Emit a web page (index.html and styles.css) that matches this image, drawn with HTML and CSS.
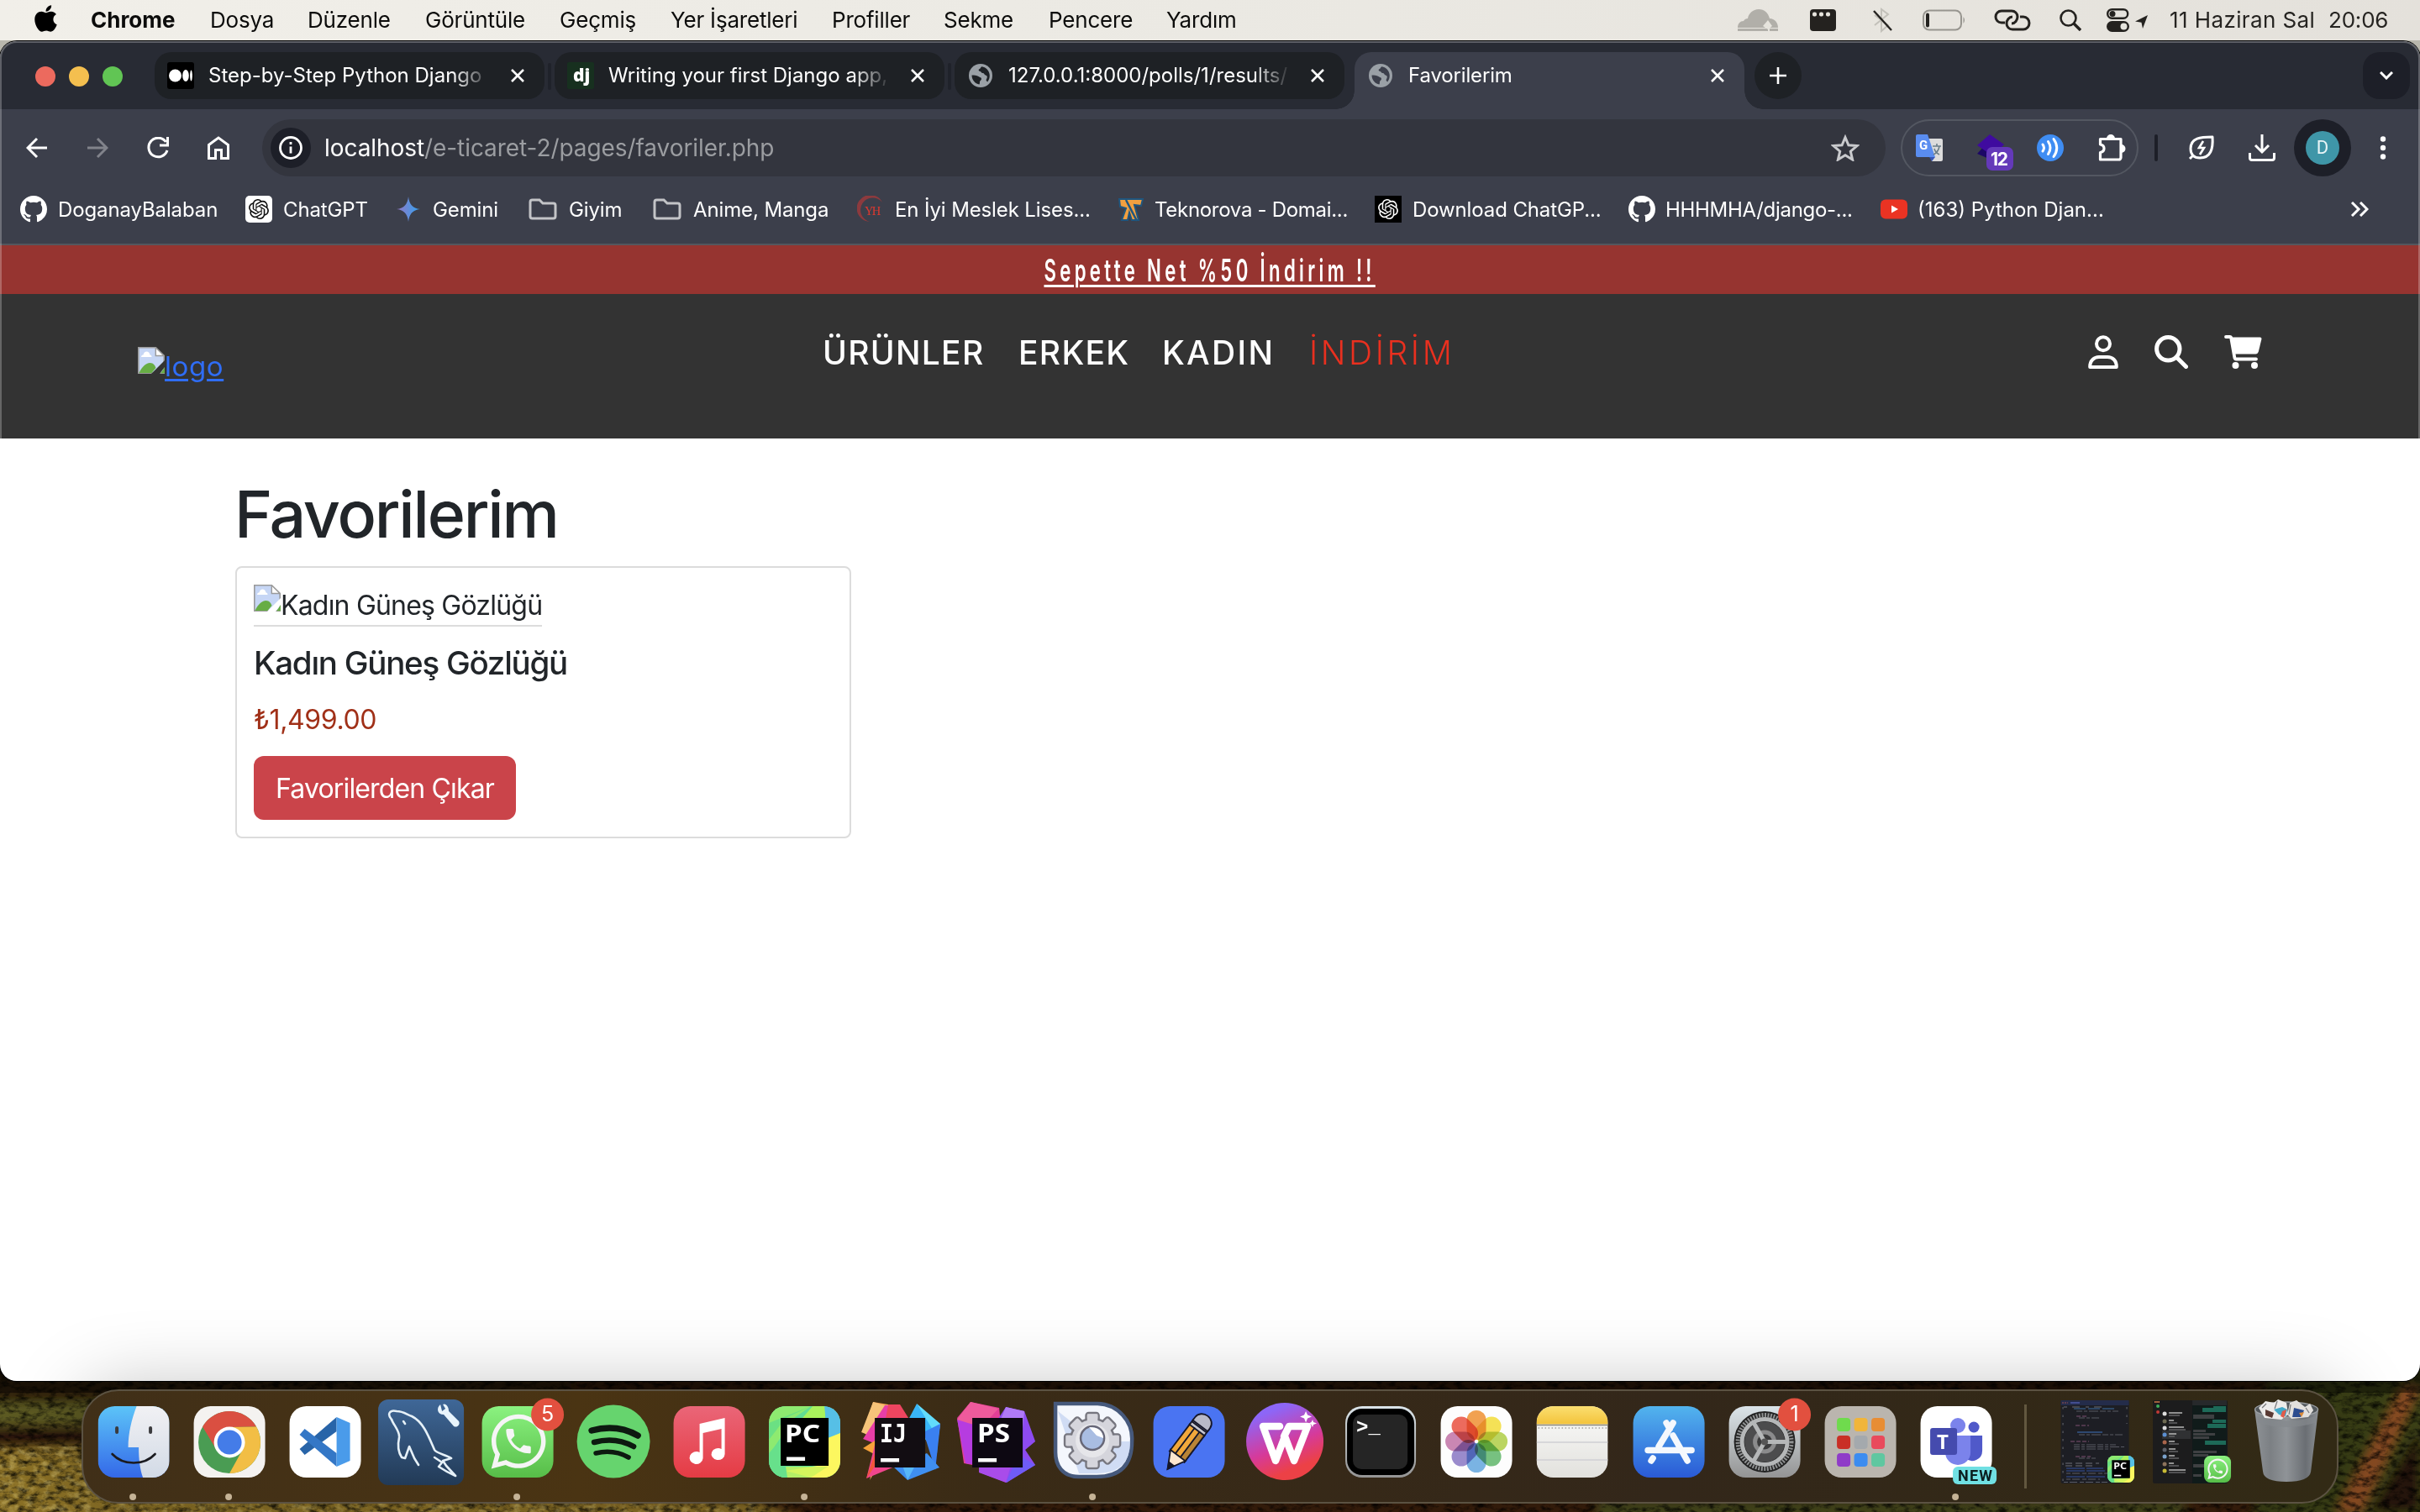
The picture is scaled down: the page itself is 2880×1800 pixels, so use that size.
FILE: index.html
```html
<!DOCTYPE html>
<html lang="tr">
<head>
<meta charset="utf-8">
<title>Favorilerim</title>
<link rel="stylesheet" href="styles.css">
</head>
<body>
<svg class="defs" width="0" height="0" aria-hidden="true">
  <defs>
    <symbol id="github" viewBox="0 0 16 16"><path fill="#fff" d="M8 0C3.58 0 0 3.58 0 8c0 3.54 2.29 6.53 5.47 7.59.4.07.55-.17.55-.38 0-.19-.01-.82-.01-1.49-2.01.37-2.53-.49-2.69-.94-.09-.23-.48-.94-.82-1.13-.28-.15-.68-.52-.01-.53.63-.01 1.08.58 1.23.82.72 1.21 1.87.87 2.33.66.07-.52.28-.87.51-1.07-1.78-.2-3.64-.89-3.64-3.95 0-.87.31-1.59.82-2.15-.08-.2-.36-1.02.08-2.12 0 0 .67-.21 2.2.82.64-.18 1.32-.27 2-.27s1.36.09 2 .27c1.53-1.04 2.2-.82 2.2-.82.44 1.1.16 1.92.08 2.12.51.56.82 1.27.82 2.15 0 3.07-1.87 3.75-3.65 3.95.29.25.54.73.54 1.48 0 1.07-.01 1.93-.01 2.2 0 .21.15.46.55.38A8.01 8.01 0 0 0 16 8c0-4.42-3.58-8-8-8z"/></symbol>
    <symbol id="openai" viewBox="0 0 24 24"><path fill="currentColor" d="M22.2819 9.8211a5.9847 5.9847 0 0 0-.5157-4.9108 6.0462 6.0462 0 0 0-6.5098-2.9A6.0651 6.0651 0 0 0 4.9807 4.1818a5.9847 5.9847 0 0 0-3.9977 2.9 6.0462 6.0462 0 0 0 .7427 7.0966 5.98 5.98 0 0 0 .511 4.9107 6.051 6.051 0 0 0 6.5146 2.9001A5.9847 5.9847 0 0 0 13.2599 24a6.0557 6.0557 0 0 0 5.7718-4.2058 5.9894 5.9894 0 0 0 3.9977-2.9001 6.0557 6.0557 0 0 0-.7475-7.0729zm-9.022 12.6081a4.4755 4.4755 0 0 1-2.8764-1.0408l.1419-.0804 4.7783-2.7582a.7948.7948 0 0 0 .3927-.6813v-6.7369l2.02 1.1686a.071.071 0 0 1 .038.052v5.5826a4.504 4.504 0 0 1-4.4945 4.4944zm-9.6607-4.1254a4.4708 4.4708 0 0 1-.5346-3.0137l.142.0852 4.783 2.7582a.7712.7712 0 0 0 .7806 0l5.8428-3.3685v2.3324a.0804.0804 0 0 1-.0332.0615L9.74 19.9502a4.4992 4.4992 0 0 1-6.1408-1.6464zM2.3408 7.8956a4.485 4.485 0 0 1 2.3655-1.9728V11.6a.7664.7664 0 0 0 .3879.6765l5.8144 3.3543-2.0201 1.1685a.0757.0757 0 0 1-.071 0l-4.8303-2.7865A4.504 4.504 0 0 1 2.3408 7.872zm16.5963 3.8558L13.1038 8.364 15.1192 7.2a.0757.0757 0 0 1 .071 0l4.8303 2.7913a4.4944 4.4944 0 0 1-.6765 8.1042v-5.6772a.79.79 0 0 0-.407-.667zm2.0107-3.0231l-.142-.0852-4.7735-2.7818a.7759.7759 0 0 0-.7854 0L9.409 9.2297V6.8974a.0662.0662 0 0 1 .0284-.0615l4.8303-2.7866a4.4992 4.4992 0 0 1 6.6802 4.66zM8.3065 12.863l-2.02-1.1638a.0804.0804 0 0 1-.038-.0567V6.0742a4.4992 4.4992 0 0 1 7.3757-3.4537l-.142.0805L8.704 5.459a.7948.7948 0 0 0-.3927.6813zm1.0976-2.3654l2.602-1.4998 2.6069 1.4998v2.9994l-2.5974 1.4997-2.6067-1.4997Z"/></symbol>
    <symbol id="globe" viewBox="0 0 28 28"><circle cx="14" cy="14" r="14" fill="#9aa0a6"/><path fill="var(--hole)" d="M3.500 13.500c3 0 6 0 8 1.500 1.600 1.200 3.500 1 3.500 3 0 1.500-2 2-2 3.500 0 1.200 0 2-.5 3-5-.6-9-5.500-9-11zM15.500 3.200c-2 .8-1 2.300-3 3-1.500.6-.8 2.500.7 2.500 1.500.2 1.500 2.300 3.300 2.300 2 0 1.700 2 3.500 2.500 1.500.5 2 1 1.700 3-.2 1.200-1.400 2-1 3.500l1.500 1.500c3.500-4 3.500-11-.5-15-1.800-1.800-4-3-6.200-3.300z"/></symbol>
    <symbol id="folder" viewBox="0 0 34 26"><path d="M2 4.500a2.500 2.500 0 0 1 2.500-2.500h8.500l4 4h12.500a2.500 2.500 0 0 1 2.500 2.500v13a2.500 2.500 0 0 1-2.500 2.500h-25a2.500 2.500 0 0 1-2.500-2.500z" fill="none" stroke="#c3c4c7" stroke-width="3"/></symbol>
    <symbol id="close" viewBox="0 0 16 16"><path d="M1 1l14 14M15 1L1 15" stroke="#fff" stroke-width="2.600" fill="none"/></symbol>
    <symbol id="broken" viewBox="0 0 32 32"><path d="M.8.8h20.500L31.200 10.500V31.200H.8z" fill="#c6d6f5" stroke="#9a9a9a" stroke-width="1.600"/><path d="M4 12c0-2 1.500-2.500 2.500-2.500 .6-2.500 2-4 4-4s3.500 1.500 4 4c1.500 0 2 1 2 2.500z" fill="#fff"/><path d="M1.500 31c3-7 8-12 13-12 4 0 6 3 7 6l-5 6z" fill="#67ad45"/><path d="M21.300.8v9.700h9.900z" fill="#fff" stroke="#9a9a9a" stroke-width="1.400"/><path d="M32 16v8l-6 8h-10z" fill="var(--page)"/><path d="M32 24.500l-5 6.700h5z" fill="#67ad45"/></symbol>
    <symbol id="whatsapp" viewBox="0 0 448 512"><path fill="#f5f5f5" fill-rule="evenodd" d="M380.900 97.100C339 55.100 283.200 32 223.900 32c-122.400 0-222 99.600-222 222 0 39.100 10.200 77.300 29.600 111L0 480l117.700-30.900c32.400 17.700 68.900 27 106.100 27h.1c122.300 0 224.100-99.600 224.100-222 0-59.300-25.200-115-67.100-157zM223.900 438.700c-33.200 0-65.700-8.900-94-25.700l-6.700-4-69.800 18.300L72 359.200l-4.400-7c-18.500-29.400-28.200-63.300-28.200-98.200 0-101.700 82.800-184.500 184.600-184.500 49.300 0 95.600 19.200 130.400 54.100 34.800 34.900 56.200 81.200 56.100 130.500 0 101.800-84.900 184.600-186.600 184.600z"/><path fill="#f5f5f5" transform="translate(88 118) scale(11.300)" d="M6.620 10.790c1.440 2.830 3.760 5.140 6.590 6.590l2.200-2.200c.27-.27.67-.36 1.020-.24 1.120.37 2.330.57 3.570.57.55 0 1 .45 1 1V20c0 .55-.45 1-1 1-9.390 0-17-7.610-17-17 0-.55.45-1 1-1h3.500c.55 0 1 .45 1 1 0 1.250.2 2.450.57 3.570.11.35.03.74-.25 1.020l-2.200 2.200z"/></symbol>
    <symbol id="pycharm" viewBox="0 0 85 85"><g clip-path="url(#sq)"><rect width="85" height="85" fill="#5fdc92"/><path d="M0 58L14 26 0 0h66v16L40 20 22 60 30 85h20L0 85z" fill="#62dd93"/><path d="M0 0h50L30 14 0 58z" fill="#8eea70"/><path d="M0 20L50 0 20 14 0 40z" fill="#54d890" opacity=".6"/><path d="M52 0h15v20L40 14z" fill="#a9f25c"/><path d="M66 0h19v32L70 38z" fill="#56bfe6"/><path d="M70 38l15-6v53H50l-30-8 50-8z" fill="#fcf75f"/><path d="M0 56l14-16v30l14 15H0z" fill="#67e08b"/><path d="M20 72h50l-20 13H22z" fill="#c9f45c" opacity=".8"/></g><rect x="14" y="14" width="57" height="57" fill="#000"/><text x="19" y="43" font-family="Noto Sans" font-weight="700" font-size="29" fill="#fff" textLength="42" lengthAdjust="spacingAndGlyphs">PC</text><rect x="21" y="60.500" width="22" height="4.500" fill="#fff"/></symbol>
    <clipPath id="sq"><rect width="85" height="85" rx="20"/></clipPath>
    <linearGradient id="gSky" x1="0" y1="0" x2="0" y2="1"><stop offset="0" stop-color="#5cc4f8"/><stop offset="1" stop-color="#3468e8"/></linearGradient>
    <linearGradient id="gFace" x1="0" y1="0" x2="0" y2="1"><stop offset="0" stop-color="#f1f1f4"/><stop offset="1" stop-color="#d2dae6"/></linearGradient>
    <linearGradient id="gSql" x1="0" y1="0" x2="0" y2="1"><stop offset="0" stop-color="#3f6797"/><stop offset="1" stop-color="#223a56"/></linearGradient>
    <linearGradient id="gWa" x1="0" y1="0" x2="0" y2="1"><stop offset="0" stop-color="#8bf280"/><stop offset="1" stop-color="#57bd48"/></linearGradient>
    <linearGradient id="gMusic" x1="0" y1="0" x2="0" y2="1"><stop offset="0" stop-color="#ea6678"/><stop offset="1" stop-color="#e53b44"/></linearGradient>
    <linearGradient id="gWps" x1=".3" y1="0" x2=".7" y2="1"><stop offset=".1" stop-color="#8d66f7"/><stop offset=".55" stop-color="#d63a9a"/><stop offset=".85" stop-color="#ec4146"/></linearGradient>
    <linearGradient id="gStore" x1="0" y1="0" x2="0" y2="1"><stop offset="0" stop-color="#52b4ee"/><stop offset="1" stop-color="#2a5ad6"/></linearGradient>
    <linearGradient id="gGray" x1="0" y1="0" x2="0" y2="1"><stop offset="0" stop-color="#dbe4e9"/><stop offset="1" stop-color="#949494"/></linearGradient>
    <linearGradient id="gNote" x1="0" y1="0" x2="0" y2="1"><stop offset="0" stop-color="#fbdf71"/><stop offset="1" stop-color="#f3c33b"/></linearGradient>
    <linearGradient id="gPaper" x1="0" y1="0" x2="0" y2="1"><stop offset="0" stop-color="#fbfbfa"/><stop offset="1" stop-color="#e2e1dd"/></linearGradient>
    <linearGradient id="gBin" x1="0" y1="0" x2="1" y2="0"><stop offset="0" stop-color="#8e9296"/><stop offset=".25" stop-color="#7c8084"/><stop offset=".5" stop-color="#8f9397"/><stop offset=".8" stop-color="#6a6e73"/><stop offset="1" stop-color="#8c9094"/></linearGradient>
    <filter id="grain" x="0" y="0" width="100%" height="100%"><feTurbulence type="fractalNoise" baseFrequency=".09 .16" numOctaves="4" seed="7"/><feColorMatrix values="0 0 0 0 0  0 0 0 0 0  0 0 0 0 0  2.6 0 0 0 -1.100"/></filter>
    <filter id="grainLight" x="0" y="0" width="100%" height="100%"><feTurbulence type="fractalNoise" baseFrequency=".1 .14" numOctaves="4" seed="21"/><feColorMatrix values="0 0 0 0 .7  0 0 0 0 .58  0 0 0 0 .2  0 2.800 0 0 -1.300"/></filter>
    <filter id="soft"><feGaussianBlur stdDeviation="6"/></filter>
  </defs>
</svg>

<div class="desktop">
  <svg class="wallpaper" viewBox="0 0 2880 180" preserveAspectRatio="none">
    <rect width="2880" height="180" fill="#3a1f0c"/>
    <g filter="url(#soft)">
      <rect x="-20" y="0" width="700" height="60" fill="#33200b"/>
      <rect x="-20" y="50" width="180" height="28" fill="#5c5a20"/>
      <rect x="-20" y="82" width="200" height="20" fill="#2a150c"/>
      <path d="M-20 104L140 102 300 156 900 166 980 200H-20z" fill="#8a6f28"/>
      <path d="M2700 0h200v200h-220z" fill="#3a3f14"/>
      <path d="M2880 30L2810 180H2780L2860 30z" fill="#8a4c24"/>
      <path d="M2880 80v100h-60z" fill="#25180c"/>
      <path d="M1900 165h700v30H1900z" fill="#47481a"/>
    </g>
    <rect width="2880" height="180" filter="url(#grain)" opacity=".75"/>
    <rect width="900" height="80" y="102" filter="url(#grainLight)" opacity=".45"/>
    <rect width="2880" height="38" fill="#000" opacity=".45"/>
  </svg>

  <header class="menubar">
    <nav class="menus">
      <svg class="apple" viewBox="0 0 384 512"><path d="M318.700 268.700c-.2-36.700 16.400-64.400 50-84.800-18.800-26.900-47.200-41.700-84.700-44.600-35.500-2.800-74.300 20.700-88.500 20.700-15 0-49.400-19.700-76.400-19.700C63.300 141.200 4 184.800 4 273.500q0 39.300 14.400 81.200c12.800 36.700 59 126.700 107.200 125.200 25.200-.6 43-17.900 75.800-17.900 31.800 0 48.300 17.900 76.400 17.900 48.600-.7 90.400-82.500 102.600-119.300-65.200-30.700-61.700-90-61.700-91.900zm-56.600-164.200c27.300-32.400 24.800-61.900 24-72.500-24.100 1.400-52 16.400-67.900 34.900-17.500 19.800-27.800 44.300-25.600 71.900 26.100 2 49.900-11.400 69.500-34.300z"/></svg>
      <b class="t">Chrome</b><span class="t">Dosya</span><span class="t">Düzenle</span><span class="t">Görüntüle</span><span class="t">Geçmiş</span><span class="t">Yer İşaretleri</span><span class="t">Profiller</span><span class="t">Sekme</span><span class="t">Pencere</span><span class="t">Yardım</span>
    </nav>
    <div class="status">
      <svg width="48" height="26" viewBox="0 0 48 26"><path fill="#b1afa9" d="M0 22c0-5 3-8 7-8 1-2 3-3 5-3 1-6 6-11 13-11s11 4 13 11c6 0 10 5 10 11z"/><path fill="#b1afa9" d="M0 23h36v3H0zM38 23h10v3H38z"/><path d="M30 20l6-7 5 7-5 4z" fill="#e6e4dd"/></svg>
      <svg width="31" height="26" viewBox="0 0 31 26"><rect width="31" height="26" rx="4" fill="#24221f"/><g fill="#e6e4dd"><rect x="3" y="3.500" width="5" height="5" rx="2"/><rect x="11" y="3.500" width="5" height="5" rx="2"/><rect x="19" y="3.500" width="5" height="5" rx="2"/></g></svg>
      <svg width="24" height="30" viewBox="0 0 24 30" fill="none"><path d="M2 9l16 12-8 7V2l8 6L2 21" stroke="#c2c0b9" stroke-width="2"/><path d="M1 4l21 23" stroke="#24221f" stroke-width="2.400"/></svg>
      <svg width="52" height="26" viewBox="0 0 52 26"><rect x="1" y="1.500" width="45" height="23" rx="7" fill="none" stroke="#97958f" stroke-width="2"/><rect x="4" y="4.500" width="4" height="17" rx="2" fill="#24221f"/><path d="M48.500 9q3 4 0 8z" fill="#97958f"/></svg>
      <svg width="44" height="26" viewBox="0 0 44 26" fill="none" stroke="#24221f" stroke-width="3"><path d="M28 9c0-4-3-7-7-7H9C5 2 2 5 2 9s3 7 7 7h4"/><path d="M31 9h4c4 0 7 3.500 7 7.500S39 24 35 24H22c-4 0-7-3-7-7"/><path d="M28 9c0 4-3 8-7 8M15 17c0-4 3-8 7-8" /></svg>
      <svg width="26" height="26" viewBox="0 0 26 26" fill="none" stroke="#24221f"><circle cx="10.500" cy="10.500" r="9" stroke-width="2.600"/><path d="M17 17l8 8" stroke-width="3.400"/></svg>
      <svg width="50" height="28" viewBox="0 0 50 28"><rect x="1.200" y="1.200" width="24" height="10.500" rx="5.200" fill="none" stroke="#24221f" stroke-width="2.400"/><circle cx="7" cy="6.500" r="3.500" fill="#24221f"/><rect y="15" width="27" height="13" rx="6.500" fill="#24221f"/><circle cx="20.500" cy="21.500" r="4" fill="#e6e4dd"/><path d="M49 8L34 15.500l7.500 1.200L43 24z" fill="#24221f"/></svg>
      <span class="t date">11 Haziran Sal</span><span class="t">20:06</span>
    </div>
  </header>

  <main class="window">
    <div class="tabstrip">
      <div class="lights"><i class="red"></i><i class="amber"></i><i class="green"></i></div>
      <div class="tab"><svg class="fav" viewBox="0 0 32 32"><rect width="32" height="32" rx="3" fill="#000"/><ellipse cx="9.500" cy="16" rx="7.500" ry="7.500" fill="#fff"/><ellipse cx="22" cy="16" rx="3.800" ry="7" fill="#fff"/><ellipse cx="28.500" cy="16" rx="1.400" ry="6.500" fill="#fff"/></svg><span class="label"><span class="t">Step-by-Step Python Django</span></span><svg class="x"><use href="#close"/></svg></div>
      <i class="sep"></i>
      <div class="tab"><svg class="fav" viewBox="0 0 32 32"><rect width="32" height="32" rx="2" fill="#17301f"/><text x="7" y="22.500" font-family="Open Sans" font-weight="800" font-size="21" fill="#fff">dj</text></svg><span class="label"><span class="t">Writing your first Django app,</span></span><svg class="x"><use href="#close"/></svg></div>
      <i class="sep"></i>
      <div class="tab"><svg class="fav small"><use href="#globe"/></svg><span class="label"><span class="t">127.0.0.1:8000/polls/1/results/</span></span><svg class="x"><use href="#close"/></svg></div>
      <div class="tab active"><svg class="fav small"><use href="#globe"/></svg><span class="label"><span class="t">Favorilerim</span></span><svg class="x"><use href="#close"/></svg></div>
      <div class="newtab"><svg width="20" height="20"><path d="M10 0v20M0 10h20" stroke="#fff" stroke-width="2.600"/></svg></div>
      <div class="tabsearch"><svg width="16" height="10"><path d="M1 1l7 7 7-7" fill="none" stroke="#fff" stroke-width="3"/></svg></div>
    </div>

    <div class="toolbar">
      <div class="navs">
        <svg width="26" height="26" viewBox="0 0 26 26" fill="none" stroke="#fff" stroke-width="3"><path d="M25 13H2M13 2L2 13l11 11"/></svg>
        <svg width="26" height="26" viewBox="0 0 26 26" fill="none" stroke="#81838b" stroke-width="3"><path d="M1 13h23M13 2l11 11-11 11"/></svg>
        <svg width="26" height="26" viewBox="0 0 26 26" fill="none" stroke="#fff" stroke-width="3"><path d="M24 16A11.300 11.300 0 1 1 22.500 6"/><path d="M24.500 0v10h-9.500" /></svg>
        <svg width="28" height="28" viewBox="0 0 28 28" fill="none" stroke="#fff" stroke-width="3"><path d="M2.500 10.500L14 2l11.500 8.500V26.500H17.500V16.500h-7V26.500H2.500z"/></svg>
      </div>
      <div class="omnibox">
        <div class="info"><svg width="28" height="28" viewBox="0 0 28 28"><circle cx="14" cy="14" r="12.500" fill="none" stroke="#fff" stroke-width="2.800"/><path d="M14 12.500v8M14 7v3" stroke="#fff" stroke-width="2.800"/></svg></div>
        <span class="t url">localhost<em>/e-ticaret-2/pages/favoriler.php</em></span>
        <svg class="star" width="34" height="32" viewBox="0 0 34 32"><path d="M17 3.500l3.900 9.300 10 .8-7.600 6.600 2.300 9.800L17 24.800 8.400 30l2.300-9.800L3.100 13.600l10-.8z" fill="none" stroke="#c9cacd" stroke-width="3"/></svg>
      </div>
      <div class="extensions">
        <svg width="32" height="32" viewBox="0 0 32 32"><path d="M14 5h16a2 2 0 0 1 2 2v23a2 2 0 0 1-2 2H19z" fill="#dcdcdc"/><path d="M0 2a2 2 0 0 1 2-2h12l9 27H2a2 2 0 0 1-2-2z" fill="#5a8df0"/><path d="M16 27h7l-4 5z" fill="#3757b5"/><text x="4" y="18" font-family="Roboto" font-weight="700" font-size="15" fill="#fff">G</text><path d="M20 14h10M25 11v3M28 14c-1 6-5 9-7 10M22 17c1 4 4 6 6 7" stroke="#6b7f8a" stroke-width="1.600" fill="none"/></svg>
        <svg width="46" height="46" viewBox="0 0 46 46"><path d="M1 24l11-12 10 8v10l-7 0z" fill="#1c0766"/><path d="M16 1l17 12-13 14L1 14z" fill="#3f0b9f"/><rect x="12" y="16" width="32" height="28" rx="7" fill="#6439b9"/><text x="17" y="37.500" font-family="Inter" font-weight="700" font-size="21" fill="#fff" textLength="21">12</text></svg>
        <svg width="32" height="32" viewBox="0 0 32 32"><circle cx="16" cy="16" r="16" fill="#3f8df3"/><g fill="none" stroke="#fff" stroke-width="3" stroke-linecap="round"><path d="M7 12q3 4 0 8M13.500 8.500q5 7.500 0 15M20 5.500q7.500 10.500 0 21"/></g></svg>
        <svg width="34" height="34" viewBox="0 0 34 34"><path d="M3.500 6.500h24.500v22a2.500 2.500 0 0 1-2.500 2.500H3.500v-8.500c6-1 6-8.500 0-9.500z" fill="none" stroke="#fff" stroke-width="3.200" stroke-linejoin="round"/><path d="M11 6a5 5 0 0 1 10 0zM28.500 13a5 5 0 0 1 0 10z" fill="#fff"/></svg>
      </div>
      <i class="divider"></i>
      <svg class="leaf" width="32" height="30" viewBox="0 0 32 30" fill="none" stroke="#fff" stroke-width="3"><path d="M29 2c-14 0-26 1-26 14 0 7 4 11 11 11 13 0 16-11 15-25zM6 24l-4 4" stroke-linejoin="round"/><path d="M18 7l-5 8h6l-5 8" stroke-width="2.600"/></svg>
      <svg class="download" width="32" height="32" viewBox="0 0 32 32" fill="none" stroke="#fff" stroke-width="3"><path d="M16 0v20M8 13l8 8 8-8M1.500 22v6q0 2.500 2.500 2.500h24q2.500 0 2.500-2.500v-6"/></svg>
      <div class="avatar"><span>D</span></div>
      <svg class="kebab" width="8" height="28"><circle cx="4" cy="3.500" r="3.200" fill="#fff"/><circle cx="4" cy="14" r="3.200" fill="#fff"/><circle cx="4" cy="24.500" r="3.200" fill="#fff"/></svg>
    </div>

    <div class="bookmarks">
      <a><svg><use href="#github"/></svg><span class="t">DoganayBalaban</span></a>
      <a><svg class="gpt" viewBox="0 0 32 32"><rect width="32" height="32" rx="5" fill="#fff"/><use href="#openai" x="4" y="4" width="24" height="24"/></svg><span class="t">ChatGPT</span></a>
      <a><svg viewBox="0 0 32 32"><defs><linearGradient id="gGem"><stop offset=".1" stop-color="#8a7bc8"/><stop offset=".8" stop-color="#459ae8"/></linearGradient></defs><path d="M16 1c1 9 5 14 14 15-9 1-13 6-14 15-1-9-5-14-14-15 9-1 13-6 14-15z" fill="url(#gGem)"/></svg><span class="t">Gemini</span></a>
      <a><svg class="dir"><use href="#folder"/></svg><span class="t">Giyim</span></a>
      <a><svg class="dir"><use href="#folder"/></svg><span class="t">Anime, Manga</span></a>
      <a><svg viewBox="0 0 32 32"><path d="M15 31A16 16 0 1 1 30 8 14.500 14.500 0 1 0 15 31z" fill="#8c3a3e"/><text x="9" y="23" font-family="Liberation Serif" font-size="14.500" fill="#e0392f" textLength="19">YH</text></svg><span class="t">En İyi Meslek Lises...</span></a>
      <a><svg viewBox="0 0 32 32"><path d="M2 4h28l-2 8-8-1 5 18h-8l-3-9-2 9H5l5-14-7-2z" fill="#f2a040" stroke="#1f567f" stroke-width="2"/><path d="M10 5l13 25" stroke="#1f567f" stroke-width="2.500"/></svg><span class="t tight">Teknorova - Domai...</span></a>
      <a><svg class="gpt inv" viewBox="0 0 32 32"><rect width="32" height="32" fill="#000"/><use href="#openai" x="4" y="4" width="24" height="24"/></svg><span class="t">Download ChatGP...</span></a>
      <a><svg><use href="#github"/></svg><span class="t tight">HHHMHA/django-...</span></a>
      <a><svg viewBox="0 0 32 32"><rect y="4.500" width="32" height="23" rx="6" fill="#ea3323"/><path d="M13 11.500v9l8-4.500z" fill="#fff"/></svg><span class="t wide">(163) Python Djan...</span></a>
      <svg class="more" width="22" height="18"><path d="M2 1l8 8-8 8M12 1l8 8-8 8" fill="none" stroke="#fff" stroke-width="3"/></svg>
    </div>

    <div class="promo"><a class="t">Sepette Net %50 İndirim !!</a></div>
    <div class="sitebar">
      <a class="logo"><svg><use href="#broken"/></svg><span class="t">logo</span></a>
      <nav class="sitenav"><a class="t">ÜRÜNLER</a><a class="t">ERKEK</a><a class="t kadin">KADIN</a><a class="t sale">İNDİRİM</a></nav>
      <div class="siteicons">
        <svg width="36" height="40" viewBox="0 0 36 40" fill="none" stroke="#fff" stroke-width="4"><circle cx="18" cy="10.200" r="8"/><path d="M2.200 38C2 30 7.500 26 13 26h10c6 0 11 4 10.800 12z" stroke-linejoin="round"/></svg>
        <svg width="40" height="40" viewBox="0 0 40 40" fill="none" stroke="#fff"><circle cx="16.300" cy="16.300" r="13.700" stroke-width="5"/><path d="M26.500 26.500l11 11" stroke-width="5" stroke-linecap="round"/></svg>
        <svg width="45" height="40" viewBox="0 0 45 40"><path d="M2 2h4.500q1.500 0 1.800 1.700l4 22.800q.3 2 2 2H38" fill="none" stroke="#fff" stroke-width="3.800" stroke-linecap="round"/><path d="M7.500 2.500H42.500q2.300 0 1.900 2.500l-3.600 14.500q-.8 3-3.500 3H12z" fill="#fff"/><circle cx="13.500" cy="36" r="4" fill="#fff"/><circle cx="36" cy="36" r="4" fill="#fff"/></svg>
      </div>
    </div>

    <section class="page">
      <h1><span class="t">Favorilerim</span></h1>
      <article class="card">
        <div class="picture"><svg><use href="#broken"/></svg><span class="t">Kadın Güneş Gözlüğü</span></div>
        <h5><span class="t">Kadın Güneş Gözlüğü</span></h5>
        <p class="price"><span class="t">₺1,499.00</span></p>
        <button><span class="t">Favorilerden Çıkar</span></button>
      </article>
    </section>
  </main>

  <footer class="dock">
    <svg viewBox="0 0 114 136"><g transform="translate(14.500 20)"><g clip-path="url(#sq)"><rect width="85" height="85" fill="url(#gSky)"/><path d="M46 0C40 16 36 32 36 49h12.500c0 14 1.500 26 5 36H85V0z" fill="url(#gFace)"/></g><rect x="20.500" y="24" width="4" height="9" rx="2" fill="#3a3a3d"/><rect x="60.500" y="24" width="4" height="9" rx="2" fill="#3a3a3d"/><path d="M17 57c13 14 38 14 51 0" fill="none" stroke="#1b1b20" stroke-width="2.600" stroke-linecap="round"/></g><circle cx="56" cy="128" r="4" class="run"/></svg>
    <svg viewBox="0 0 114 136"><g transform="translate(14.500 20)"><rect width="85" height="85" rx="20" fill="#f4f2f0"/><circle cx="42.500" cy="43" r="37" fill="#4a9c53"/><path d="M10.500 24.500A37 37 0 0 1 74.500 24.500L42.500 25 27 52z" fill="#da4f41"/><path d="M74.500 24.500A37 37 0 0 1 42.500 80L58 52 42.500 25z" fill="#f2be45"/><circle cx="42.500" cy="43" r="18.500" fill="#fff"/><circle cx="42.500" cy="43" r="14.500" fill="#447ce8"/></g><circle cx="56" cy="128" r="4" class="run"/></svg>
    <svg viewBox="0 0 114 136"><g transform="translate(14.500 20)"><rect width="85" height="85" rx="20" fill="#fff"/><path d="M56 13L12 51l6 7L56 30z" fill="#2864a8"/><path d="M56 72L12 34l6-7 38 29z" fill="#3477c6"/><path d="M56 13l16 7v45l-16 7z" fill="#4a9bea"/></g></svg>
    <svg viewBox="0 0 114 136"><rect x="6" y="12" width="102" height="102" rx="12" fill="url(#gSql)"/><g fill="none" stroke="#e6f1f8" stroke-width="2.600" stroke-linejoin="round" stroke-linecap="round"><path d="M22 36c-6-7-2-12 6-10 8 0 12 4 18 6 14 7 20 24 27 40 2 4 14 6 20 10l-10 3 4 6 11 12c-7-3-14-7-20-11l4-5-9-6"/><path d="M22 36c2 6 10 14 9 21-2 9-1 18 3 24l4 1 5-14 6 14 5 8"/><path d="M36 38l2 3"/></g><path d="M80 18c-5 4-4 12 4 12l12 14c4 2 8-2 6-6L90 26c0-6-4-10-7-8l3 5-4 3z" fill="#e8f4fc"/></svg>
    <svg viewBox="0 0 114 136"><g transform="translate(14.500 20)"><rect width="85" height="85" rx="20" fill="url(#gWa)"/><use href="#whatsapp" x="10" y="5" width="67" height="74"/></g><circle cx="92.500" cy="30" r="19.500" class="badge"/><text x="92.500" y="38" class="badge-n">5</text><circle cx="56" cy="128" r="4" class="run"/></svg>
    <svg viewBox="0 0 114 136"><circle cx="57" cy="62" r="43.500" fill="#66d46e"/><g fill="none" stroke="#0d1a10" stroke-linecap="round"><path d="M31 49q30-8 55 6" stroke-width="7.500"/><path d="M34 63q25-7 47 5" stroke-width="6.500"/><path d="M36 76q21-5 39 5" stroke-width="5.500"/></g></svg>
    <svg viewBox="0 0 114 136"><g transform="translate(14.500 20)"><rect width="85" height="85" rx="20" fill="url(#gMusic)"/><path d="M31 21l30-7v43a8 7 0 1 1-4-6V27l-22 5v30a8 7.500 0 1 1-4-7z" fill="#fff"/></g></svg>
    <svg viewBox="0 0 114 136"><use href="#pycharm" x="14" y="20" width="85" height="85"/><circle cx="56" cy="128" r="4" class="run"/></svg>
    <svg viewBox="0 0 114 136"><g transform="translate(2 0)"><path d="M22 15l18 3 10 20-20 50-12 20 10-40-18-18z" fill="#f4a85a"/><path d="M22 15L8 51l20 8L38 20z" fill="#f6c47a"/><path d="M36 19l18 0 12 20-30 30-26-10z" fill="#e83ea8"/><path d="M40 18h14l10 16-28 6z" fill="#ee4560"/><path d="M10 70L32 56l8 30z" fill="#f7a23a"/><path d="M14 106L24 66l38 20z" fill="#f0458c"/><path d="M14 106l10-30 8 4z" fill="#f2553c"/><path d="M74 17l28 24-4 26z" fill="#62dcfb"/><path d="M74 17L64 36l34 40 1-18z" fill="#39b6f8"/><path d="M102 41l-20 10 14 45z" fill="#3a80f0"/><path d="M46 92l40-16 15 17-38 15z" fill="#3f8ff0"/><path d="M56 88l20-5-13 25z" fill="#58b8fa"/><rect x="24" y="34" width="60" height="59" fill="#120d12"/><text x="30" y="63" font-family="DejaVu Sans Mono" font-weight="700" font-size="30" fill="#fff" textLength="32" lengthAdjust="spacingAndGlyphs">IJ</text><rect x="31" y="82" width="22" height="4.500" fill="#fff"/></g></svg>
    <svg viewBox="0 0 114 136"><g transform="translate(4 0)"><path d="M22 15l34 7 6 60-38 8-10-2L6 34z" fill="#e33f97"/><path d="M6 36l36 6v50l-26-4z" fill="#b63ce0"/><path d="M22 15l33 8-20 22L6 36z" fill="#ee5a9c"/><path d="M64 21l22 5 13 36-12 10 12 18-34 21-32-12 10-46z" fill="#8d4bf0"/><path d="M64 21l22 5-2 20-28-6z" fill="#b07af7"/><path d="M32 90l40-6-8 27-32-12z" fill="#a94cea"/><path d="M64 111l35-21-20-12z" fill="#6f5cf7"/><rect x="24" y="34" width="60" height="59" fill="#0d0812"/><text x="30" y="63" font-family="Noto Sans" font-weight="700" font-size="30" fill="#fff" textLength="39" lengthAdjust="spacingAndGlyphs">PS</text><rect x="31" y="82" width="22" height="4.500" fill="#fff"/></g></svg>
    <svg viewBox="0 0 114 136"><path d="M12 17h50a42 42 0 0 1 41 45c0 26-12 42-42 42H40C20 104 12 90 12 75z" fill="#f4f7fd" stroke="#46597c" stroke-width="4.500"/><path d="M15 26l45 36h41c0 24-12 38-39 38H40z" fill="#c4d3f0" opacity=".75"/><g transform="translate(56 61)"><g fill="#d5d5dc" stroke="#76767f" stroke-width="2.500"><rect x="-7.500" y="-33" width="15" height="66" rx="3"/><rect x="-7.500" y="-33" width="15" height="66" rx="3" transform="rotate(45)"/><rect x="-7.500" y="-33" width="15" height="66" rx="3" transform="rotate(90)"/><rect x="-7.500" y="-33" width="15" height="66" rx="3" transform="rotate(135)"/><circle r="26"/></g><g fill="#d5d5dc"><rect x="-6.300" y="-31.500" width="12.600" height="63"/><rect x="-6.300" y="-31.500" width="12.600" height="63" transform="rotate(45)"/><rect x="-6.300" y="-31.500" width="12.600" height="63" transform="rotate(90)"/><rect x="-6.300" y="-31.500" width="12.600" height="63" transform="rotate(135)"/></g><circle r="20" fill="#e6e6ea"/><circle cy="-3" r="14" fill="#a9bde2" stroke="#676777" stroke-width="2.500"/><path d="M-4-16q16 0 17 13l-8-3z" fill="#fff"/></g><circle cx="56" cy="128" r="4" class="run"/></svg>
    <svg viewBox="0 0 114 136"><rect x="14.500" y="20" width="85" height="85" rx="20" fill="#4a74f2"/><g transform="translate(57 61) rotate(37) scale(.92)" stroke="#16172a" stroke-width="2"><path d="M-12-18h24v44H-12z" fill="#f2a83b"/><path d="M4-18h8v44H4z" fill="#b98436"/><path d="M-12 24L0 46 12 24z" fill="#fde6cf"/><path d="M-4 38L0 46l4-8z" fill="#16172a"/><rect x="-12" y="-26" width="24" height="9" fill="#c6c6d0"/><path d="M-12-24v-5a12 11 0 0 1 24 0v5z" fill="#b9bac8"/><path d="M-4-18v42M-12-22h24"/></g></svg>
    <svg viewBox="0 0 114 136"><circle cx="57" cy="62" r="46" fill="url(#gWps)"/><path d="M31 44h20M31 44l15 41 11-29 11 29L84 44H62l-6 12" fill="none" stroke="#fff" stroke-width="8.500" stroke-linejoin="round" stroke-linecap="round"/><path d="M82 26l2 4.500 5 2-5 2-2 5-2-5-5-2 5-2zM90 36l1 3 4 1.500-4 1.500-1 3-1.500-3-3-1.500 3-1.500z" fill="#fff"/></svg>
    <svg viewBox="0 0 114 136"><rect x="15" y="20" width="84" height="85" rx="20" fill="url(#gGray)"/><rect x="17" y="23" width="80" height="79" rx="18" fill="#000"/><rect x="24" y="30" width="65" height="65" rx="10" fill="#252525"/><text x="28" y="52" font-family="Liberation Mono" font-weight="700" font-size="24" fill="#fff">&gt;_</text></svg>
    <svg viewBox="0 0 114 136"><rect x="14.500" y="20" width="85" height="85" rx="20" fill="#fdfdfd"/><g transform="translate(57 62)" opacity=".88" class="petals"><rect x="-11.500" y="-37" width="23" height="35" rx="11.500" fill="#f0953a"/><rect x="-11.500" y="-37" width="23" height="35" rx="11.500" fill="#f3de3f" transform="rotate(45)"/><rect x="-11.500" y="-37" width="23" height="35" rx="11.500" fill="#b3d04c" transform="rotate(90)"/><rect x="-11.500" y="-37" width="23" height="35" rx="11.500" fill="#65b96f" transform="rotate(135)"/><rect x="-11.500" y="-37" width="23" height="35" rx="11.500" fill="#68a9e0" transform="rotate(180)"/><rect x="-11.500" y="-37" width="23" height="35" rx="11.500" fill="#8d7cc6" transform="rotate(225)"/><rect x="-11.500" y="-37" width="23" height="35" rx="11.500" fill="#c377a9" transform="rotate(270)"/><rect x="-11.500" y="-37" width="23" height="35" rx="11.500" fill="#ea5747" transform="rotate(315)"/></g></svg>
    <svg viewBox="0 0 114 136"><g transform="translate(14.500 20)" clip-path="url(#sq)"><rect width="85" height="85" fill="url(#gPaper)"/><rect width="85" height="21.500" fill="url(#gNote)"/><path d="M0 22.500h85" stroke="#8c8b82" stroke-width="1.500"/><path d="M2 26h83" stroke="#b5b5b3" stroke-width="2" stroke-dasharray="1.500 2.500"/><path d="M0 43h85M0 64h85" stroke="#cfcfd3" stroke-width="1.500"/></g></svg>
    <svg viewBox="0 0 114 136"><rect x="14.500" y="20" width="85" height="85" rx="20" fill="url(#gStore)"/><g stroke="#f4f8fd" stroke-width="7.500" stroke-linecap="round"><path d="M62 40L45 68M32 72.500h52M54 40l4 7M62 55l17 30M38 82l-2 3"/></g></svg>
    <svg viewBox="0 0 114 136"><rect x="14.500" y="20" width="85" height="85" rx="20" fill="url(#gGray)"/><g transform="translate(57 62.500)"><circle r="36.500" fill="#222"/><circle r="32" fill="none" stroke="#8f9192" stroke-width="5" stroke-dasharray="2 1.500"/><circle r="27" fill="none" stroke="#b5b7b8" stroke-width="5"/><circle r="24" fill="#4c4c4d"/><circle r="14" fill="#8b8b8c"/><circle r="9" fill="#3c3c3d"/><path d="M0 0h27M0 0L-13.500-23.500M0 0L-13.500 23.500" stroke="#b5b7b8" stroke-width="5"/><circle r="4" fill="#555"/></g><circle cx="92.500" cy="30" r="19.500" class="badge"/><text x="92.500" y="38" class="badge-n">1</text></svg>
    <svg viewBox="0 0 114 136"><rect x="14.500" y="20" width="85" height="85" rx="20" fill="#bab5ae"/><g transform="translate(29 34)"><rect width="16" height="16" rx="4" fill="#6fdb4d"/><rect x="20.500" width="16" height="16" rx="4" fill="#f1b53a"/><rect x="41" width="16" height="16" rx="4" fill="#e88d34"/><rect y="21" width="16" height="16" rx="4" fill="#c92f26"/><rect x="20.500" y="21" width="16" height="16" rx="4" fill="#a4a9ad"/><rect x="41" y="21" width="16" height="16" rx="4" fill="#e94a5c"/><rect y="42" width="16" height="16" rx="4" fill="#8f3bc8"/><rect x="20.500" y="42" width="16" height="16" rx="4" fill="#3c8cf0"/><rect x="41" y="42" width="16" height="16" rx="4" fill="#5fc7a0"/></g></svg>
    <svg viewBox="0 0 114 136"><rect x="14.500" y="20" width="85" height="85" rx="20" fill="#fff"/><circle cx="59" cy="43" r="9" fill="#7b83eb"/><circle cx="78" cy="45" r="6.500" fill="#5059c9"/><path d="M64 55h24v18a12 12 0 0 1-20 9z" fill="#5059c9"/><path d="M44 55h30v20a15 15 0 0 1-30 0z" fill="#7b83eb"/><rect x="26" y="46" width="32" height="32" rx="3" fill="#454bae"/><text x="34" y="71" font-family="Open Sans" font-weight="700" font-size="24" fill="#fff">T</text><rect x="53" y="92" width="52" height="21" rx="6" fill="#70e0e3"/><text x="59" y="109" font-family="Roboto" font-weight="700" font-size="18" fill="#0b1f20" textLength="41">NEW</text><circle cx="56" cy="128" r="4" class="run"/></svg>
    <i class="rule"></i>
    <svg viewBox="0 0 114 136"><rect x="16.500" y="13" width="81" height="99" rx="2" fill="#1d1e24"/><rect x="16.500" y="13" width="81" height="6" fill="#242c4a"/><g stroke-width="1.200" fill="none" opacity=".75"><path d="M18 16h7" stroke="#c8605a" stroke-dasharray="2 1"/><path d="M28 16h11" stroke="#6b7bea"/><path d="M20 21h52" stroke="#888b95" stroke-dasharray="4 6 9 7"/><path d="M32 23h48" stroke="#4b8ad0" stroke-dasharray="14 3"/><path d="M35 26h50M38 34h24M38 54h52M32 66h50M32 68.500h60M32 71h44M38 82h20" stroke="#6d6f78" stroke-dasharray="7 2 4 2 11 2"/><path d="M35 32h12M34 43h16M34 80h18M28 62h22" stroke="#a0638c" stroke-dasharray="5 2"/><path d="M36 51h30" stroke="#437fd0"/><path d="M22 88h40M22 91h34" stroke="#878a93" stroke-dasharray="8 4"/><path d="M23 94h44M23 97h46M23 104h46" stroke="#3c63c8" stroke-dasharray="22 2"/><path d="M23 100h50M23 107h40M20 110.500h52" stroke="#70727b" stroke-dasharray="5 2 9 3"/><path d="M19 21v88M95 21v20" stroke="#70727b" stroke-dasharray="2.500 7"/></g><use href="#pycharm" x="72" y="79" width="32" height="32"/></svg>
    <svg viewBox="0 0 114 136"><rect x="12" y="13" width="89" height="99" rx="2" fill="#1c1c1d"/><rect x="59" y="13" width="41" height="99" fill="#101b1a"/><rect x="59" y="13" width="41" height="6" fill="#27292b"/><rect x="23" y="49" width="34" height="10" fill="#303133"/><g stroke-width="5" stroke-linecap="round"><path d="M26 29h0" stroke="#ddd"/><path d="M26 38h0" stroke="#6d6a52"/><path d="M26 46h0" stroke="#d7d7d9"/><path d="M26 54h0" stroke="#5b8fd2"/><path d="M26 63h0" stroke="#a9654b"/><path d="M26 72h0" stroke="#5d6069"/><path d="M26 80h0" stroke="#7ba2cc"/><path d="M26 89h0" stroke="#8c735c"/><path d="M26 97h0" stroke="#c7ba34"/></g><path d="M31 28h16M31 37h6M31 45h18M31 53h9M31 62h7M31 71h8M31 79h7M31 88h6M31 96h20" stroke="#b8b8b8" stroke-width="1.300"/><path d="M31 31h13M31 40h10M31 48h20M31 56h7M31 65h12M31 74h11M31 82h12M31 91h12M31 99h20" stroke="#636365" stroke-width="1.300"/><g fill="#1d6a58"><rect x="84" y="20" width="15" height="2"/><rect x="71" y="22" width="28" height="5"/><rect x="83" y="36" width="16" height="4"/><rect x="77" y="41" width="22" height="5"/><rect x="74" y="61" width="25" height="5"/></g><g fill="#3e4042"><rect x="60" y="30" width="25" height="5"/><rect x="60" y="48" width="15" height="3"/><rect x="60" y="52" width="26" height="3"/><rect x="60" y="56" width="19" height="3"/><rect x="60" y="73" width="28" height="3"/><rect x="60" y="77" width="18" height="3"/><rect x="60" y="89" width="14" height="4"/><rect x="60" y="101" width="10" height="3"/></g><path d="M14 15h6" stroke="#d57a4a" stroke-width="2" stroke-dasharray="1.500 .7"/><circle cx="18" cy="20" r="2" fill="#3fae5a"/><circle cx="18" cy="27" r="2" fill="#c23a36"/><g transform="translate(73 79) scale(.376)"><rect width="85" height="85" rx="20" fill="url(#gWa)"/><use href="#whatsapp" x="10" y="5" width="67" height="74"/></g></svg>
    <svg viewBox="0 0 114 136"><path d="M19 24q38-14 76 0L86 98q-2 12-29 12T29 98z" fill="url(#gBin)"/><ellipse cx="57" cy="24" rx="37.500" ry="9" fill="#53585c" stroke="#9a9ea2" stroke-width="1.500"/><path d="M24 22l8-8 10 2 5-4 10 4 2 14-8 6-20-2z" fill="#ecebe9"/><path d="M58 30l3-14 8-3 10 8 6-4 4 8-6 8-20 2z" fill="#e2e0dd"/><path d="M42 24l10-3 6 3-2 8-8-2z" fill="#42a8c8"/><path d="M52 26l5-2-3 10-4-2z" fill="#e05a4a"/><path d="M66 22l12 3-4 8-10 0z" fill="#2c4c8e"/><path d="M72 28l6-1-3 6z" fill="#d98a3a"/><path d="M32 24l10 4-2 6-8-3z" fill="#5a3a34"/><path d="M28 22l5-5M46 14l-3 9M80 22l4 6M62 18l-2 12" stroke="#77787a" stroke-width="1.200"/><path d="M22 32q35 11 70 0l-1 8q-34 10-68 0z" fill="#85898d" opacity=".7"/></svg>
  </footer>
</div>
</body>
</html>
```
FILE: styles.css
```css
* { box-sizing: border-box; }
body { margin: 0; font-family: Inter, "Noto Sans", sans-serif; }
svg { display: block; flex: none; }
.defs { position: absolute; }
.t { white-space: pre; }

.desktop {
  position: relative;
  width: 2880px;
  height: 1800px;
  overflow: hidden;
  display: flex;
  flex-direction: column;
  background: #b9b7ad;
}
.wallpaper { position: absolute; left: 0; bottom: 0; width: 2880px; height: 180px; }

/* menu bar */
.menubar {
  height: 48px;
  flex: none;
  display: flex;
  justify-content: space-between;
  align-items: center;
  background: linear-gradient(90deg, #f1efe9, #ebe9e3 50%, #e4e1db);
  color: #0c0c0b;
  font-size: 26px;
  line-height: 46px;
}
.menus {
  display: grid;
  align-items: center;
  padding-left: 41px;
  grid-template-columns: 67px 142px 116px 140px 160px 132px 192px 133px 125px 140px 100px;
}
.menus span { letter-spacing: -.2px; }
.apple { width: 27px; height: 36px; margin-top: -4px; }
.status {
  display: grid;
  align-items: center;
  width: 812px;
  grid-template-columns: 86px 75px 59px 85px 78px 56px 75px 189px 109px;
  color: #262421;
}
.date { letter-spacing: .4px; }
.date + .t { letter-spacing: -.2px; }

/* browser window */
.window {
  position: relative;
  height: 1595px;
  flex: none;
  margin-top: 1px;
  display: flex;
  flex-direction: column;
  background: #fff;
  border-radius: 20px;
  overflow: hidden;
  box-shadow: 0 0 0 1px #000;
  margin-bottom: 10px;
}
.window::after {
  content: "";
  position: absolute;
  inset: 0;
  border-radius: 20px;
  border: 2px solid rgba(255, 255, 255, .25);
}
.tabstrip {
  height: 81px;
  flex: none;
  display: flex;
  padding-top: 13px;
  background: #282b34;
  color: #fff;
  font-size: 24px;
}
.lights { display: flex; gap: 16px; width: 184px; padding: 17px 0 0 42px; }
.lights i { width: 24px; height: 24px; border-radius: 50%; }
.red { background: #ec6a5e; }
.amber { background: #f4bf4f; }
.green { background: #61c554; }
.tab {
  --hole: #1e2125;
  width: 464px;
  height: 56px;
  flex: none;
  display: flex;
  align-items: center;
  padding: 0 24px 0 15px;
  border-radius: 20px;
  background: #1e2125;
}
.tab + .sep { width: 4px; height: 32px; margin: 13px 4px 0; border-radius: 2px; background: #1f222a; }
.fav { width: 32px; height: 32px; margin-right: 17px; }
.fav.small { width: 28px; height: 28px; margin: 0 19px 0 2px; }
.label {
  flex: 1;
  white-space: pre;
  line-height: 40px;
  margin-right: 23px;
  -webkit-mask-image: linear-gradient(90deg, #000 86%, transparent 100%);
}
.x { width: 16px; height: 16px; }
.tab.active {
  --hole: #3c3f4b;
  position: relative;
  margin-left: 12px;
  height: 68px;
  padding-bottom: 12px;
  border-radius: 20px 20px 0 0;
  background: #3c3f4b;
}
.tab.active .label { letter-spacing: -.15px; }
.tab.active::before, .tab.active::after {
  content: "";
  position: absolute;
  bottom: 0;
  width: 22px;
  height: 22px;
  background: radial-gradient(circle at 0 0, transparent 21.5px, #3c3f4b 22px);
}
.tab.active::before { left: -22px; }
.tab.active::after { right: -22px; background: radial-gradient(circle at 100% 0, transparent 21.5px, #3c3f4b 22px); }
.newtab, .tabsearch { width: 56px; height: 56px; display: grid; place-items: center; background: #1e2125; border-radius: 50%; margin-left: 12px; }
.tabsearch { margin-left: auto; margin-right: 12px; border-radius: 20px; background: #1d1f28; }

.toolbar { height: 92px; flex: none; display: flex; align-items: center; background: #3c3f4b; }
.navs { width: 312px; display: grid; align-items: center; padding-left: 31px; grid-template-columns: 72px 72px 71px 60px; }
.omnibox { width: 1932px; height: 68px; display: flex; align-items: center; padding: 0 31px 0 10px; border-radius: 34px; background: #33353e; }
.info { width: 48px; height: 48px; display: grid; place-items: center; border-radius: 50%; background: #1d1f28; }
.url { flex: 1; padding-left: 16px; color: #fff; font-size: 28px; letter-spacing: -.07px; }
.url em { font-style: normal; color: #9b9da1; }
.extensions {
  width: 283px;
  height: 68px;
  margin-left: 18px;
  padding: 0 0 0 16px;
  display: grid;
  grid-template-columns: 72px 72px 72px 34px;
  align-items: center;
  border: 2px solid #535761;
  border-radius: 34px;
}
.extensions svg:nth-child(2) { margin-top: 12px; }
.divider { width: 4px; height: 32px; border-radius: 2px; margin-left: 19px; background: #1d1f28; }
.leaf { margin-left: 36px; }
.download { margin-left: 40px; }
.avatar { width: 68px; height: 68px; margin-left: 22px; display: grid; place-items: center; border-radius: 50%; background: #1d1f28; }
.avatar span { width: 40px; height: 40px; border-radius: 50%; background: #3f96a8; color: #e8f4f6; font: 22px/40px Roboto, sans-serif; text-align: center; }
.kebab { margin-left: 34px; }

.bookmarks {
  height: 70px;
  flex: none;
  display: grid;
  align-items: center;
  padding: 0 0 14px 24px;
  grid-template-columns: 268px 178px 159px 148px 243px 310px 306px 302px 300px 559px 22px;
  background: #3c3f4b;
  border-bottom: 2px solid #54565d;
  color: #fff;
  font-size: 24px;
  letter-spacing: -.12px;
}
.bookmarks a { display: flex; align-items: center; gap: 13px; }
.bookmarks a svg { width: 32px; height: 32px; }
.bookmarks a svg.dir { width: 34px; height: 26px; margin-right: 1px; }
.bookmarks .tight { letter-spacing: -.3px; margin-left: -1px; }
.bookmarks .wide { letter-spacing: 0; margin-left: -1px; }
.gpt { color: #111; }
.gpt.inv { color: #fff; }

/* site */
.promo { height: 58px; flex: none; display: flex; justify-content: center; align-items: center; background: #963430; color: #fff; font-size: 37px; font-weight: 600; }
.promo a { text-decoration: underline; text-decoration-thickness: 3px; text-underline-offset: 4px; letter-spacing: 7.200px; transform: scaleX(.6); }
.sitebar { height: 172px; flex: none; display: flex; background: #333; color: #fff; }
.logo { --page: #333; display: flex; width: 979px; padding: 63px 0 0 164px; color: #2f6df6; font-size: 33px; line-height: 46px; letter-spacing: .6px; text-decoration: none; }
.logo span { text-decoration: underline; text-decoration-thickness: 3px; text-underline-offset: 3px; }
.logo svg, .picture svg { width: 32px; height: 32px; }
.sitenav { display: grid; width: 1506px; grid-template-columns: 233px 171px 175px 200px; padding-top: 46px; font-size: 39px; line-height: 48px; font-weight: 500; letter-spacing: 1.300px; }
.sitenav .kadin { letter-spacing: 2.300px; }
.sitenav .sale { color: #e9301f; font-weight: 300; letter-spacing: 3.600px; }
.siteicons { display: grid; grid-template-columns: 79px 83px 45px; padding-top: 49px; align-items: start; }

.page { flex: 1; padding: 42px 278px 0 280px; color: #212529; }
h1 { margin: 0 0 14px -1px; font-size: 77px; line-height: 96px; font-weight: 500; letter-spacing: -2.200px; }
.card { width: 733px; height: 324px; padding: 20px; border: 2px solid #dcdcdc; border-radius: 8px; display: flex; flex-direction: column; align-items: flex-start; }
.picture { --page: #fff; height: 50px; display: flex; border-bottom: 2px solid #dcdcdc; font-size: 32px; line-height: 50px; letter-spacing: -.8px; }
h5 { margin: 19px 0 0; font-size: 38.500px; line-height: 48px; font-weight: 500; letter-spacing: -1.250px; }
.price { margin: 20px 0 0; font-size: 32px; line-height: 48px; letter-spacing: -.4px; color: #a03018; }
.card button { width: 312px; height: 76px; margin-top: 19px; padding: 0; border: 0; border-radius: 12px; background: #ca444a; color: #fff; font: 32px Inter, sans-serif; letter-spacing: -.85px; }

/* dock */
.dock {
  position: relative;
  width: 2686px;
  height: 136px;
  flex: none;
  margin-left: 97px;
  padding-left: 3px;
  display: flex;
  border: 2px solid #5b5242;
  border-radius: 44px;
  background: linear-gradient(90deg, #402f18, #4a3413 22%, #3a2b16 40%, #33271a 70%, #322a15);
  box-shadow: 0 0 90px rgba(0, 0, 0, .26);
}
.dock svg { width: 114.16px; height: 136px; margin-top: -2px; }
.petals rect { mix-blend-mode: multiply; }
.run { fill: #c5b396; }
.badge { fill: #e2503f; }
.badge-n { fill: #fff; font: 25px Inter, sans-serif; text-anchor: middle; }
.rule { width: 3px; height: 100px; margin: 16px 24px 0 24px; background: #62573f; }
```
